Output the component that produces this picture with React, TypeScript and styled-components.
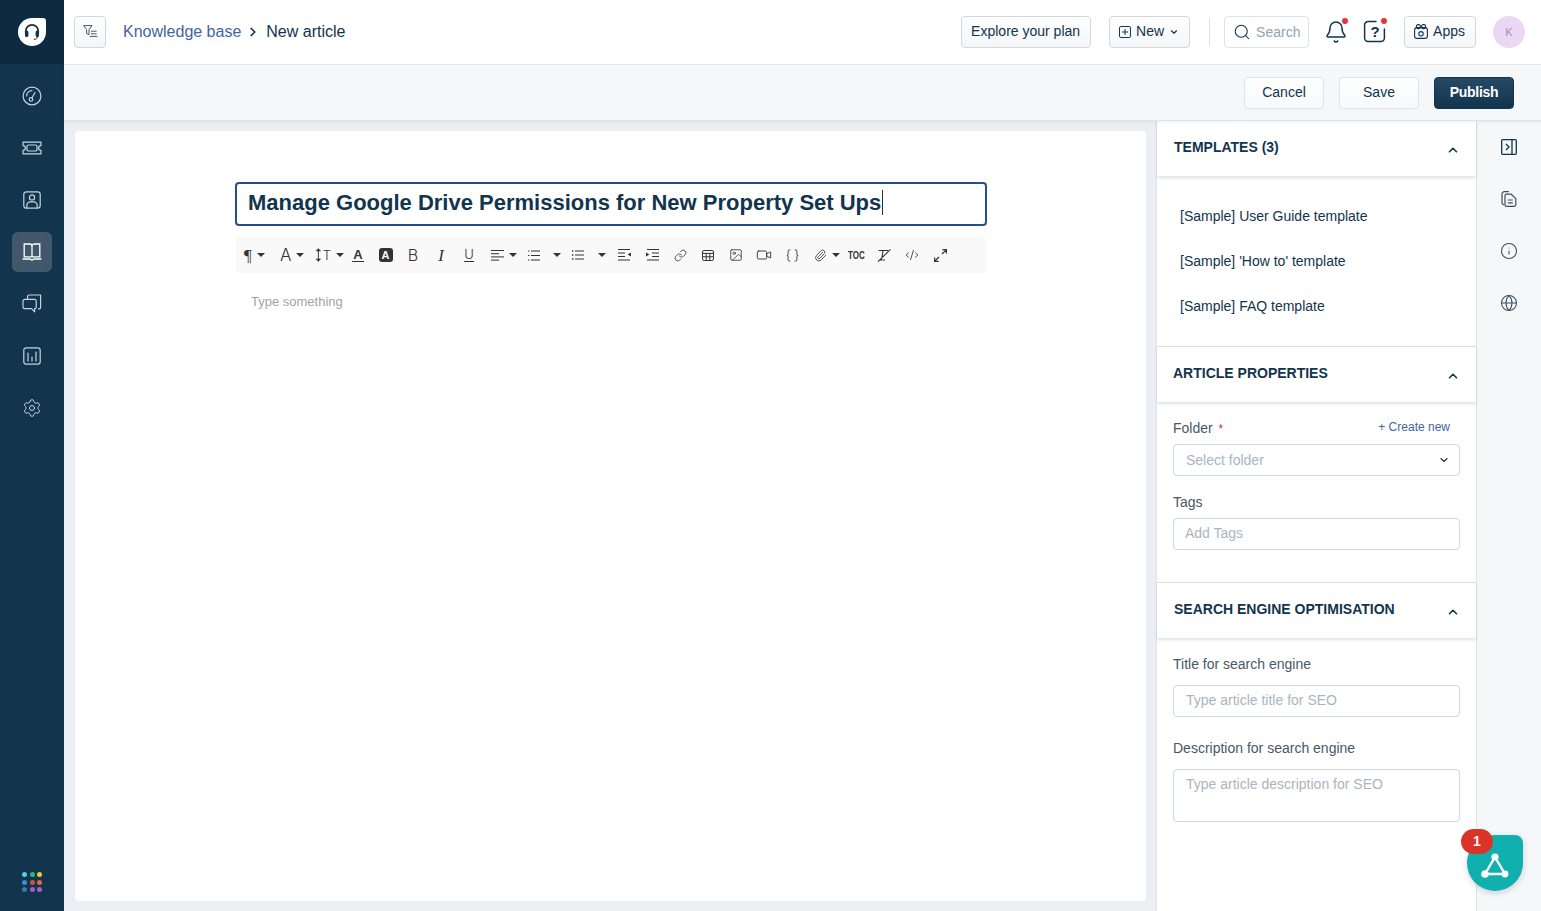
import styled, { createGlobalStyle } from 'styled-components'
import {
  ChevronDown,
  ChevronUp,
  ChevronRight,
  Search,
  Settings,
  Link,
  Image,
  Video,
  Paperclip,
  CodeXml,
  Braces,
  Globe,
  Info,
  Bell,
} from 'lucide-react'

const GlobalStyle = createGlobalStyle`
  html, body {
    margin: 0;
    padding: 0;
    height: 100%;
    overflow: hidden;
  }
  body {
    font-family: 'Liberation Sans', Arial, sans-serif;
    color: #12344d;
  }
  * {
    box-sizing: border-box;
  }
`

const templates = ['[Sample] User Guide template', "[Sample] 'How to' template", '[Sample] FAQ template']

const dots = ['#4fd1e8', '#2fb486', '#f0c92e', '#3d8fd6', '#c9504f', '#d9703a', '#3a7ea8', '#9a5fc9', '#a862c4']

// 사이드바 아이콘들
const GaugeIcon = () => (
  <svg width="20" height="20" viewBox="0 0 20 20" fill="none" stroke="currentColor" strokeWidth="1.2">
    <circle cx="10" cy="10" r="8.9" />
    <circle cx="9" cy="13.4" r="1.8" />
    <path d="M10 11.8 13 6.5M4.6 10A5.4 5.4 0 0 1 10 4.6" strokeLinecap="round" />
  </svg>
)

const TicketIcon = () => (
  <svg width="20" height="14" viewBox="0 0 20 14" fill="none" stroke="currentColor" strokeWidth="1.2">
    <path d="M1 1.2h18v3.4a2.4 2.4 0 0 0 0 4.8v3.4H1V9.4a2.4 2.4 0 0 0 0-4.8z" strokeLinejoin="round" />
    <rect x="5" y="4" width="10" height="6" rx="1.6" />
  </svg>
)

const ContactIcon = () => (
  <svg width="18" height="18" viewBox="0 0 18 18" fill="none" stroke="currentColor" strokeWidth="1.2">
    <rect x="0.8" y="0.8" width="16.4" height="16.4" rx="2.4" />
    <circle cx="9" cy="6.4" r="2.6" />
    <path d="M3.8 17v-2.6A3.6 3.6 0 0 1 7.4 10.8h3.2a3.6 3.6 0 0 1 3.6 3.6V17" />
  </svg>
)

const BookIcon = () => (
  <svg width="20" height="18" viewBox="0 0 20 18" fill="none" stroke="currentColor" strokeWidth="1.3">
    <path d="M2.2 1h5.6A2.2 2.2 0 0 1 10 3.2v10.6H2.2zM17.8 1h-5.6A2.2 2.2 0 0 0 10 3.2v10.6h7.8z" />
    <path d="M1 16h7l2 1.2 2-1.2h7" strokeLinecap="round" />
  </svg>
)

const ChatIcon = () => (
  <svg width="20" height="20" viewBox="0 0 20 20" fill="none" stroke="currentColor" strokeWidth="1.2">
    <path d="M5.6 5V2.4A1.4 1.4 0 0 1 7 1h11.6v12.4a1.4 1.4 0 0 1-1.4 1.4H16" />
    <path d="M2.6 5.4h10a1.6 1.6 0 0 1 1.6 1.6v6a1.6 1.6 0 0 1-1.6 1.6v3.2l-3-3.2h-7A1.6 1.6 0 0 1 1 13V7a1.6 1.6 0 0 1 1.6-1.6z" strokeLinejoin="round" />
  </svg>
)

const ReportIcon = () => (
  <svg width="18" height="18" viewBox="0 0 18 18" fill="none" stroke="currentColor" strokeWidth="1.2">
    <rect x="0.8" y="0.8" width="16.4" height="16.4" rx="2.4" />
    <path d="M5 6v8M9 10v4M13 5v9" strokeLinecap="round" />
  </svg>
)

const LogoIcon = () => (
  <svg width="28" height="28" viewBox="0 0 28 28">
    <path d="M14 0h11a3 3 0 0 1 3 3v11a14 14 0 0 1-28 0A14 14 0 0 1 14 0z" fill="#fff" />
    <path d="M7.8 16v-3a6.2 6.2 0 0 1 12.4 0v3" fill="none" stroke="#12344d" strokeWidth="1.8" />
    <rect x="7" y="12.6" width="3.4" height="6.4" rx="1.5" fill="#12344d" />
    <rect x="17.6" y="12.6" width="3.4" height="6.4" rx="1.5" fill="#12344d" />
    <path d="M19.4 18.8c0 2-1.6 2.6-3.6 2.6" fill="none" stroke="#12344d" strokeWidth="1" />
  </svg>
)

const FilterListIcon = () => (
  <svg width="15" height="14" viewBox="0 0 15 14" fill="none" stroke="#475867" strokeWidth="1">
    <path d="M0.6 0.6h8.4L6 4.6v5.2L3.6 8.4V4.6z" strokeLinejoin="round" />
    <path d="M8 6.2h5.6M8 8.8h5.6M6.8 11.4h7.6" />
  </svg>
)

const PlusBoxIcon = () => (
  <svg width="12" height="12" viewBox="0 0 12 12" fill="none" stroke="#12344d" strokeWidth="1">
    <rect x="0.5" y="0.5" width="11" height="11" rx="1.4" />
    <path d="M6 3v6M3 6h6" />
  </svg>
)

const HelpIcon = () => (
  <svg width="24" height="24" viewBox="0 0 24 24" fill="none" stroke="#12344d" strokeWidth="1.5">
    <path d="M13 1.6H5A3.4 3.4 0 0 0 1.6 5v13A3.4 3.4 0 0 0 5 21.4h13a3.4 3.4 0 0 0 3.4-3.4v-9" strokeLinecap="round" />
  </svg>
)

const AppsIcon = () => (
  <svg width="14" height="15" viewBox="0 0 14 15" fill="none" stroke="#12344d" strokeWidth="1.1">
    <rect x="0.6" y="3.6" width="12.8" height="10.8" rx="2.4" />
    <rect x="2.4" y="0.6" width="4" height="4" rx="1.6" />
    <rect x="7.6" y="0.6" width="4" height="4" rx="1.6" />
    <circle cx="7" cy="9.8" r="2.2" />
  </svg>
)

const PanelIcon = () => (
  <svg width="16" height="16" viewBox="0 0 16 16" fill="none" stroke="#12344d" strokeWidth="1.3">
    <rect x="0.7" y="0.7" width="14.6" height="14.6" rx="1" />
    <path d="M11 0.7v14.6M5 5l3 3-3 3" />
  </svg>
)

const DocsIcon = () => (
  <svg width="16" height="16" viewBox="0 0 16 16" fill="none" stroke="#3b4d5c" strokeWidth="1.2">
    <path d="M2.6 13.6A2 2 0 0 1 1 11.6V3a2.4 2.4 0 0 1 2.4-2.4h4" strokeLinecap="round" />
    <path d="M5.6 3.2h4.6l4.6 4.4v6.2a1.6 1.6 0 0 1-1.6 1.6H5.6A1.6 1.6 0 0 1 4 13.8V4.8a1.6 1.6 0 0 1 1.6-1.6z" strokeLinejoin="round" />
    <path d="M6.8 9h5M6.8 11.8h5" />
  </svg>
)

const ParagraphIcons = {
  align: (
    <svg width="13" height="11" viewBox="0 0 13 11" stroke="#333" strokeWidth="1">
      <path d="M0 0.5h13M0 3.7h8M0 6.9h13M0 10.1h8" />
    </svg>
  ),
  ol: (
    <svg width="12" height="11" viewBox="0 0 12 11" stroke="#333" strokeWidth="1">
      <path d="M3 1h9M3 5.5h9M3 10h9M0 1h1.4M0 5.5h1.4M0 10h1.4" />
    </svg>
  ),
  ul: (
    <svg width="12" height="10" viewBox="0 0 12 10" stroke="#333" strokeWidth="1">
      <path d="M3 1h9M3 5h9M3 9h9" />
      <path d="M0 1h1.4M0 5h1.4M0 9h1.4" strokeWidth="1.4" />
    </svg>
  ),
  outdent: (
    <svg width="13" height="12" viewBox="0 0 13 12" stroke="#333" strokeWidth="1">
      <path d="M0 0.5h12M0 4h7M0 7.5h7M0 11h12" />
      <path d="M13 3.4v4.2L9.6 5.5z" fill="#333" stroke="none" />
    </svg>
  ),
  indent: (
    <svg width="13" height="12" viewBox="0 0 13 12" stroke="#333" strokeWidth="1">
      <path d="M1 0.5h12M6 4h7M6 7.5h7M1 11h12" />
      <path d="M0 3.4v4.2L3.4 5.5z" fill="#333" stroke="none" />
    </svg>
  ),
  table: (
    <svg width="12" height="11" viewBox="0 0 12 11" fill="none" stroke="#333" strokeWidth="1">
      <rect x="0.5" y="0.5" width="11" height="10" rx="1.6" />
      <path d="M0.5 3.4h11M0.5 6.8h11M4.2 3.4v7M7.8 3.4v7" />
    </svg>
  ),
  lineHeight: (
    <svg width="7" height="14" viewBox="0 0 7 14" fill="#333" stroke="#333" strokeWidth="1">
      <path d="M3.5 1v12" />
      <path d="M3.5 0 6.4 3H0.6zM3.5 14 0.6 11h5.8z" stroke="none" />
    </svg>
  ),
  clear: (
    <svg width="14" height="13" viewBox="0 0 14 13" fill="none" stroke="#333" strokeWidth="1.1">
      <path d="M1.5 1.5h9.5M6 1.5 4.6 11H2M8 11H5.5M13.4 0.4 1 12.6" />
    </svg>
  ),
  expand: (
    <svg width="13" height="13" viewBox="0 0 13 13" fill="none" stroke="#333" strokeWidth="1.2">
      <path d="M8 5 12.2 0.8M8.4 0.6h4v4M5 8 0.8 12.2M0.6 8.4v4h4" />
    </svg>
  ),
}

export default function App() {
  return (
    <Page>
      <GlobalStyle />
      <Sidebar>
        <LogoBox>
          <LogoIcon />
        </LogoBox>
        <NavList>
          <NavItem><GaugeIcon /></NavItem>
          <NavItem><TicketIcon /></NavItem>
          <NavItem><ContactIcon /></NavItem>
          <NavItem $active><BookIcon /></NavItem>
          <NavItem><ChatIcon /></NavItem>
          <NavItem><ReportIcon /></NavItem>
          <NavItem><Settings size={20} strokeWidth={1.2} /></NavItem>
        </NavList>
        <DotGrid>
          {dots.map((c) => (
            <Dot key={c} $color={c} />
          ))}
        </DotGrid>
      </Sidebar>

      <Main>
        <Header>
          <FilterButton>
            <FilterListIcon />
          </FilterButton>
          <Crumbs>
            <CrumbLink>Knowledge base</CrumbLink>
            <ChevronRight size={14} strokeWidth={3} color="#12344d" />
            <CrumbCurrent>New article</CrumbCurrent>
          </Crumbs>
          <HeaderRight>
            <HeadButton $mr={18}>
              <span>Explore your plan</span>
            </HeadButton>
            <HeadButton $mr={19}>
              <PlusBoxIcon />
              <span>New</span>
              <ChevronDown size={10} strokeWidth={2.8} />
            </HeadButton>
            <HeadDivider />
            <SearchBox>
              <Search size={18} strokeWidth={1.4} color="#12344d" />
              <span>Search</span>
            </SearchBox>
            <IconBadge>
              <Bell size={24} strokeWidth={1.5} color="#12344d" />
              <RedDot />
            </IconBadge>
            <IconBadge>
              <HelpIcon />
              <HelpMark>?</HelpMark>
              <RedDot />
            </IconBadge>
            <HeadButton $mr={17}>
              <AppsIcon />
              <span>Apps</span>
            </HeadButton>
            <Avatar>K</Avatar>
          </HeaderRight>
        </Header>

        <ActionBar>
          <ActionButton>Cancel</ActionButton>
          <ActionButton>Save</ActionButton>
          <ActionButton $primary>Publish</ActionButton>
        </ActionBar>

        <Workspace>
          <EditorArea>
            <EditorCard>
              <TitleInput>
                Manage Google Drive Permissions for New Property Set Ups<Caret />
              </TitleInput>
              <Toolbar>
                <Tool $w={36} $caret>
                  <Glyph $size={17} $serif>¶</Glyph>
                </Tool>
                <Tool $w={35} $caret>
                  <Glyph $size={17}>A</Glyph>
                </Tool>
                <Tool $w={29} $caret>
                  {ParagraphIcons.lineHeight}
                  <Glyph $size={13}>T</Glyph>
                </Tool>
                <Tool>
                  <UnderA>A</UnderA>
                </Tool>
                <Tool $w={27}>
                  <FilledA>A</FilledA>
                </Tool>
                <Tool>
                  <Glyph $size={16}>B</Glyph>
                </Tool>
                <Tool>
                  <Glyph $size={17} $serif $italic>I</Glyph>
                </Tool>
                <Tool>
                  <UnderU>U</UnderU>
                </Tool>
                <Tool $w={37} $pl={8} $caret>{ParagraphIcons.align}</Tool>
                <Tool>{ParagraphIcons.ol}</Tool>
                <Tool $w={16} $pl={1} $caret />
                <Tool>{ParagraphIcons.ul}</Tool>
                <Tool $w={18} $pl={2} $caret />
                <Tool>{ParagraphIcons.outdent}</Tool>
                <Tool>{ParagraphIcons.indent}</Tool>
                <Tool><Link size={13} strokeWidth={1.5} /></Tool>
                <Tool>{ParagraphIcons.table}</Tool>
                <Tool><Image size={14} strokeWidth={1.4} /></Tool>
                <Tool><Video size={16} strokeWidth={1.4} /></Tool>
                <Tool><Braces size={15} strokeWidth={1.4} /></Tool>
                <Tool $w={36} $pl={8} $caret><Paperclip size={13} strokeWidth={1.5} /></Tool>
                <Tool><TocText>TOC</TocText></Tool>
                <Tool>{ParagraphIcons.clear}</Tool>
                <Tool><CodeXml size={14} strokeWidth={1.5} /></Tool>
                <Tool>{ParagraphIcons.expand}</Tool>
              </Toolbar>
              <Placeholder>Type something</Placeholder>
            </EditorCard>
          </EditorArea>

          <SidePanel>
            <SectionHead $h={55} $pl={17}>
              <SectionTitle>TEMPLATES (3)</SectionTitle>
              <ChevronUp size={14} strokeWidth={2.8} />
            </SectionHead>
            <TemplateList>
              {templates.map((t) => (
                <TemplateItem key={t}>{t}</TemplateItem>
              ))}
            </TemplateList>

            <SectionHead $h={56} $top>
              <SectionTitle>ARTICLE PROPERTIES</SectionTitle>
              <ChevronUp size={14} strokeWidth={2.8} />
            </SectionHead>
            <PropsBody>
              <FieldLabelRow>
                <FieldLabel>
                  Folder <Required>*</Required>
                </FieldLabel>
                <CreateLink>+ Create new</CreateLink>
              </FieldLabelRow>
              <FieldBox $pl={12}>
                Select folder
                <ChevronDown size={12} strokeWidth={2.2} color="#12344d" />
              </FieldBox>
              <FieldLabel $mt={18}>Tags</FieldLabel>
              <FieldBox $pl={11} $pb={3}>Add Tags</FieldBox>
            </PropsBody>

            <SectionHead $h={56} $top $pl={17}>
              <SectionTitle>SEARCH ENGINE OPTIMISATION</SectionTitle>
              <ChevronUp size={14} strokeWidth={2.8} />
            </SectionHead>
            <SeoBody>
              <FieldLabel>Title for search engine</FieldLabel>
              <FieldBox $pl={12} $mt={13} $pb={3}>Type article title for SEO</FieldBox>
              <FieldLabel $mt={23}>Description for search engine</FieldLabel>
              <TextareaBox>Type article description for SEO</TextareaBox>
            </SeoBody>
          </SidePanel>

          <Rail>
            <RailItem><PanelIcon /></RailItem>
            <RailItem><DocsIcon /></RailItem>
            <RailItem><Info size={18} strokeWidth={1.4} /></RailItem>
            <RailItem><Globe size={18} strokeWidth={1.4} /></RailItem>
          </Rail>
        </Workspace>
      </Main>

      <Fab>
        <svg width="30" height="28" viewBox="0 0 30 28" fill="none" stroke="#fff" strokeWidth="2.4">
          <path d="M15 5 5 22h20z" strokeLinejoin="round" />
          <circle cx="15" cy="5" r="3.6" fill="#fff" stroke="none" />
          <circle cx="5" cy="22" r="3.8" fill="#fff" stroke="none" />
          <circle cx="25" cy="22" r="3.4" fill="#fff" stroke="none" />
        </svg>
        <FabBadge>1</FabBadge>
      </Fab>
    </Page>
  )
}

const Page = styled.div`
  display: flex;
  height: 100vh;
  width: 100%;
  overflow: hidden;
`

const Sidebar = styled.aside`
  width: 64px;
  flex-shrink: 0;
  background: #12344d;
  display: flex;
  flex-direction: column;
  align-items: center;
`

const LogoBox = styled.div`
  width: 100%;
  height: 64px;
  background: #0d2a40;
  display: flex;
  align-items: center;
  justify-content: center;
`

const NavList = styled.nav`
  flex: 1;
  display: flex;
  flex-direction: column;
  align-items: center;
  gap: 12px;
  padding-top: 12px;
`

const NavItem = styled.div<{ $active?: boolean }>`
  width: 40px;
  height: 40px;
  border-radius: 6px;
  display: flex;
  align-items: center;
  justify-content: center;
  background: ${(p) => (p.$active ? '#41576b' : 'transparent')};
  color: ${(p) => (p.$active ? '#fff' : '#c5d3de')};
`

const DotGrid = styled.div`
  display: grid;
  grid-template-columns: repeat(3, 5px);
  gap: 2.5px;
  margin-bottom: 19px;
`

const Dot = styled.span<{ $color: string }>`
  width: 5px;
  height: 5px;
  border-radius: 50%;
  background: ${(p) => p.$color};
`

const Main = styled.div`
  flex: 1;
  min-width: 0;
  display: flex;
  flex-direction: column;
`

const Header = styled.header`
  height: 65px;
  flex-shrink: 0;
  background: #fff;
  border-bottom: 1px solid #e6eaee;
  display: flex;
  align-items: center;
  padding: 0 16px 1px 10px;
`

const FilterButton = styled.div`
  width: 32px;
  height: 32px;
  border: 1px solid #cfd7df;
  border-radius: 4px;
  background: linear-gradient(#fff, #f3f5f7);
  display: flex;
  align-items: center;
  justify-content: center;
`

const Crumbs = styled.div`
  display: flex;
  align-items: center;
  gap: 4px;
  margin-left: 17px;
  font-size: 16px;
`

const CrumbLink = styled.span`
  color: #44659e;
  margin-right: 1px;
`

const CrumbCurrent = styled.span`
  color: #12344d;
  margin-left: 2px;
`

const HeaderRight = styled.div`
  margin-left: auto;
  display: flex;
  align-items: center;
`

const HeadButton = styled.div<{ $mr?: number }>`
  height: 32px;
  padding: 0 10px 0 9px;
  margin-right: ${(p) => p.$mr ?? 0}px;
  border: 1px solid #cfd7df;
  border-radius: 4px;
  background: linear-gradient(#fff, #f3f5f7);
  display: flex;
  align-items: center;
  gap: 5px;
  font-size: 14px;
  color: #12344d;

  span {
    margin-bottom: 1px;
  }
`

const HeadDivider = styled.div`
  width: 1px;
  height: 28px;
  background: #dbe1e6;
  margin-right: 14px;
`

const SearchBox = styled.div`
  width: 85px;
  height: 32px;
  border: 1px solid #dde3e8;
  border-radius: 4px;
  background: #fff;
  display: flex;
  align-items: center;
  gap: 5px;
  padding-left: 8px;
  font-size: 14px;
  color: #92a2b1;
`

const IconBadge = styled.div`
  position: relative;
  width: 24px;
  height: 24px;
  margin-left: 15px;
  display: flex;
  align-items: center;
  justify-content: center;

  & + & {
    margin-right: 17px;
  }
`

const RedDot = styled.span`
  position: absolute;
  top: -2px;
  right: 0;
  width: 6px;
  height: 6px;
  border-radius: 50%;
  background: #e43538;
`

const HelpMark = styled.span`
  position: absolute;
  inset: 0;
  display: flex;
  align-items: center;
  justify-content: center;
  font-size: 15px;
  font-weight: 700;
  color: #12344d;
`

const Avatar = styled.div`
  width: 32px;
  height: 32px;
  border-radius: 50%;
  background: #e9d7f3;
  color: #a08fb0;
  display: flex;
  align-items: center;
  justify-content: center;
  font-size: 11px;
`

const ActionBar = styled.div`
  height: 56px;
  flex-shrink: 0;
  background: #f5f7f9;
  border-bottom: 1px solid #dfe4e9;
  box-shadow: 0 1px 3px rgba(18, 52, 77, 0.08);
  display: flex;
  align-items: center;
  justify-content: flex-end;
  gap: 15px;
  padding: 0 27px 0 0;
  position: relative;
  z-index: 1;
`

const ActionButton = styled.div<{ $primary?: boolean }>`
  width: 80px;
  height: 32px;
  padding-bottom: 2px;
  border-radius: 4px;
  border: 1px solid ${(p) => (p.$primary ? '#12344d' : '#dfe4e9')};
  background: ${(p) => (p.$primary ? 'linear-gradient(#264966, #12344d)' : 'linear-gradient(#fff, #f7f9fa)')};
  color: ${(p) => (p.$primary ? '#fff' : '#12344d')};
  font-size: 14px;
  font-weight: ${(p) => (p.$primary ? 700 : 400)};
  letter-spacing: ${(p) => (p.$primary ? '-0.3px' : '0')};
  display: flex;
  align-items: center;
  justify-content: center;
`

const Workspace = styled.div`
  flex: 1;
  min-height: 0;
  display: flex;
`

const EditorArea = styled.div`
  flex: 1;
  min-width: 0;
  background: #ebeff3;
  padding: 10px 10px 10px 11px;
  display: flex;
`

const EditorCard = styled.div`
  flex: 1;
  min-width: 0;
  background: #fff;
  border-radius: 4px;
  padding: 51px 159px 0 160px;
  display: flex;
  flex-direction: column;
`

const TitleInput = styled.div`
  height: 44px;
  border: 2px solid #264f83;
  border-radius: 4px;
  padding: 0 11px 3px 11px;
  display: flex;
  align-items: center;
  font-size: 22px;
  font-weight: 700;
  color: #12344d;
  white-space: nowrap;
`

const Caret = styled.span`
  width: 1px;
  height: 25px;
  background: #12344d;
  margin-left: 1px;
`

const Toolbar = styled.div`
  height: 36px;
  margin: 11px 1px 0;
  padding-left: 8px;
  background: #f9f9f9;
  display: flex;
  align-items: center;
`

const Tool = styled.div<{ $w?: number; $caret?: boolean; $pl?: number }>`
  width: ${(p) => p.$w ?? 28}px;
  height: 36px;
  padding-left: ${(p) => p.$pl ?? 0}px;
  flex-shrink: 0;
  display: flex;
  align-items: center;
  justify-content: ${(p) => (p.$caret ? 'flex-start' : 'center')};
  gap: 1px;
  color: #333;

  ${(p) =>
    p.$caret &&
    `&::after {
      content: '';
      margin-left: 4px;
      border-left: 4px solid transparent;
      border-right: 4px solid transparent;
      border-top: 4px solid #333;
    }`}
`

const Glyph = styled.span<{ $size?: number; $italic?: boolean; $serif?: boolean }>`
  font-size: ${(p) => p.$size ?? 15}px;
  font-family: ${(p) => (p.$serif ? "'Liberation Serif', serif" : "Inter, 'Liberation Sans', sans-serif")};
  font-style: ${(p) => (p.$italic ? 'italic' : 'normal')};
  font-weight: 300;
  color: #333;
  line-height: 1;
`

const UnderA = styled.span`
  font-size: 13px;
  font-weight: 700;
  line-height: 13px;
  border-bottom: 1.5px solid #333;
  padding: 0 1px;
`

const FilledA = styled.span`
  width: 14px;
  height: 14px;
  border-radius: 3px;
  background: #333;
  color: #fff;
  font-size: 11px;
  font-weight: 700;
  display: flex;
  align-items: center;
  justify-content: center;
`

const UnderU = styled.span`
  font-family: Inter, 'Liberation Sans', sans-serif;
  font-weight: 300;
  font-size: 13px;
  line-height: 13px;
  border-bottom: 1px solid #333;
`

const TocText = styled.span`
  font-size: 10px;
  font-weight: 700;
  color: #333;
  transform: scaleX(0.8);
`

const Placeholder = styled.div`
  margin: 21px 0 0 16px;
  font-size: 13px;
  color: #a3a3a3;
  line-height: 16px;
`

const SidePanel = styled.div`
  width: 321px;
  flex-shrink: 0;
  background: #fff;
  border-left: 1px solid #dfe4e9;
  border-right: 1px solid #dfe4e9;
  display: flex;
  flex-direction: column;
`

const SectionHead = styled.div<{ $h: number; $top?: boolean; $pl?: number }>`
  height: ${(p) => p.$h}px;
  flex-shrink: 0;
  border-top: ${(p) => (p.$top ? '1px solid #dadfe3' : 'none')};
  box-shadow: 0 2px 3px rgba(18, 52, 77, 0.14);
  display: flex;
  align-items: center;
  justify-content: space-between;
  padding: 0 16px 4px ${(p) => p.$pl ?? 16}px;
  position: relative;

  svg {
    margin-top: 7px;
  }
`

const SectionTitle = styled.div`
  font-size: 14px;
  font-weight: 700;
  color: #12344d;
`

const TemplateList = styled.div`
  height: 170px;
  flex-shrink: 0;
  padding: 31px 0 0 23px;
  display: flex;
  flex-direction: column;
  gap: 27px;
`

const TemplateItem = styled.div`
  font-size: 14px;
  line-height: 18px;
  color: #12344d;
`

const PropsBody = styled.div`
  height: 180px;
  flex-shrink: 0;
  padding: 18px 16px 0 16px;
`

const FieldLabelRow = styled.div`
  display: flex;
  align-items: center;
  justify-content: space-between;
  padding-right: 10px;
  margin-bottom: 8px;
`

const FieldLabel = styled.div<{ $mt?: number }>`
  font-size: 14px;
  line-height: 16px;
  color: #475867;
  margin-top: ${(p) => p.$mt ?? 0}px;
`

const Required = styled.span`
  color: #d72d30;
  margin-left: 2px;
  font-size: 12px;
`

const CreateLink = styled.span`
  font-size: 12px;
  margin-top: -4px;
  color: #44659e;
`

const FieldBox = styled.div<{ $pl: number; $mt?: number; $pb?: number }>`
  height: 32px;
  margin-top: ${(p) => p.$mt ?? -1}px;
  border: 1px solid #cfd7df;
  border-radius: 4px;
  background: #fff;
  padding: 0 9px ${(p) => p.$pb ?? 1}px ${(p) => p.$pl}px;
  display: flex;
  align-items: center;
  justify-content: space-between;
  font-size: 14px;
  color: #a9b5c0;

  ${FieldLabel} + & {
    margin-top: ${(p) => p.$mt ?? 8}px;
  }
`

const SeoBody = styled.div`
  padding: 18px 16px 0 16px;
`

const TextareaBox = styled.div`
  height: 53px;
  margin-top: 13px;
  border: 1px solid #cfd7df;
  border-radius: 4px;
  padding: 5px 12px;
  font-size: 14px;
  line-height: 18px;
  color: #a9b5c0;
`

const Rail = styled.div`
  width: 64px;
  flex-shrink: 0;
  background: #f5f7f9;
  display: flex;
  flex-direction: column;
  align-items: center;
`

const RailItem = styled.div`
  width: 100%;
  height: 52px;
  display: flex;
  align-items: center;
  justify-content: center;
  color: #3b4d5c;
`

const Fab = styled.div`
  position: absolute;
  left: 1467px;
  top: 835px;
  width: 56px;
  height: 56px;
  background: #0fb0ad;
  border-radius: 28px 8px 28px 28px;
  box-shadow: 0 2px 6px rgba(18, 52, 77, 0.2);
  display: flex;
  align-items: center;
  justify-content: center;
  padding-top: 6px;
`

const FabBadge = styled.span`
  position: absolute;
  left: -6px;
  top: -6px;
  width: 32px;
  height: 25px;
  padding-bottom: 2px;
  border-radius: 13px;
  background: #db3327;
  color: #fff;
  font-size: 14px;
  font-weight: 700;
  display: flex;
  align-items: center;
  justify-content: center;
`
